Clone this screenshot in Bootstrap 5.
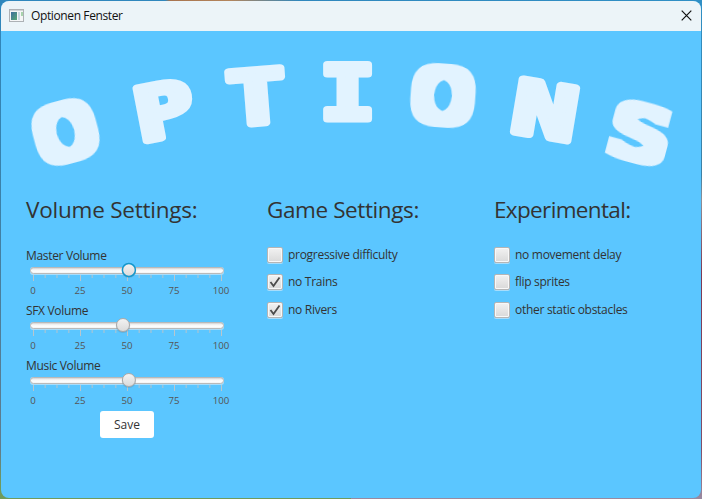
<!DOCTYPE html>
<html lang="de">
<head>
<meta charset="utf-8">
<meta name="viewport" content="width=device-width, initial-scale=1">
<title>Optionen Fenster</title>
<link href="https://cdn.jsdelivr.net/npm/bootstrap@5.3.0/dist/css/bootstrap.min.css" rel="stylesheet">
<style>
html,body{height:100%;overflow:hidden}
body{padding:1px 1px 1px 1px;background:linear-gradient(90deg,#2f87bd 0,#2f87bd 165px,#a8744f 170px,#b3855c 230px,#2f87bd 300px,#2f8fc5 100%) top/100% 12px no-repeat,linear-gradient(#2f87bd,#3c81a8 40%,#607c8c 90%,#6f9a5c 97%) left/50% 100% no-repeat,linear-gradient(#2f8fc5,#3d81a5 35%,#8d8f98 40%,#7d3a55 55%,#80506a 90%,#9a8aa0) right/50% 100% no-repeat;font-family:"Open Sans","Noto Sans",sans-serif;font-size:12px;line-height:16px;color:#333}
.window{height:497px;width:700px;border-radius:8px;background:#5bc6ff}
.titlebar{height:30px;background:#ecf4f8;color:#111;padding:0 9px 0 8px}
.titlebar span{letter-spacing:-.38px}
.banner{height:165px}
.banner text{font:bold 74px "DejaVu Sans Mono",monospace;text-anchor:middle;fill:#e2f3ff;stroke:#e2f3ff;stroke-width:7px;stroke-linejoin:round}
.banner .squared text{font-weight:400;font-size:72px;stroke:none}
.settings{padding-left:25px}
.col-volume{width:241px}
.col-game{width:227px}
h2{font-size:22.5px;line-height:30px;font-weight:400;margin:-1px 0 22px;letter-spacing:-.22px;white-space:nowrap}
.col-game h2{letter-spacing:-.4px}
.col-extra h2{letter-spacing:-.65px}
.field{height:55px;width:204px}
.field label{display:block;height:16px;letter-spacing:-.33px}
#sliders{padding-top:1px}
.slider{display:block;margin-top:-2px}
.slider text{font-size:9.7px;fill:#555;text-anchor:middle}
.btn-save{width:54px;height:27px;padding:0;margin-left:74px;margin-top:-2px;font-size:12px;background:#fff;border:0;border-radius:3px;color:#333}
.option{height:27.5px;letter-spacing:-.29px}
.option:first-child{height:27px}
.box{width:16px;height:16px;margin-right:3px;border:1px solid #b5b5b5;border-radius:2px;background:linear-gradient(#f2f2f2,#d9d9d9);box-shadow:inset 0 0 0 1px #f8f8f8,0 1px 0 #a8ddfb;flex:none}
.box svg{display:block}
.caption{padding-left:2px}
</style>
</head>
<body>
<main class="window overflow-hidden d-flex flex-column">
<header class="titlebar d-flex align-items-center justify-content-between">
<div class="d-flex align-items-center">
<svg width="15" height="13" viewBox="0 0 15 13" style="margin:-2px 7px 0 0"><defs><linearGradient id="pane" x2="1" y2="1"><stop stop-color="#3d6e9e"/><stop offset="1" stop-color="#58a874"/></linearGradient></defs><rect x=".5" y=".5" width="14" height="12" fill="#f5f6f7" stroke="#adb1b5"/><path d="M1 1.5h13" stroke="#d1d5d8"/><path fill="url(#pane)" d="M2 3h6v8H2z"/><path fill="#c9d9e2" d="M9 3h2v8H9z"/><path fill="#a8d3ad" d="M12 3h2v4h-2z"/></svg>
<span>Optionen Fenster</span></div>
<svg width="11" height="11" viewBox="0 0 11 11" style="margin-top:-2px"><path d="M.7.7l9.6 9.6M10.3.7L.7 10.3" stroke="#111" stroke-width="1.2"/></svg>
</header>
<svg class="banner" width="700" height="165" viewBox="1 31 700 165" role="img" aria-label="Options">
<defs><filter id="fat" x="-50%" y="-50%" width="200%" height="200%"><feMorphology operator="dilate" radius="6 5"/></filter></defs>
<g class="squared" transform="translate(65.5 132) rotate(-15)"><g filter="url(#fat)"><text transform="scale(1.5 1)" y="26.3">O</text></g></g>
<g transform="translate(164 110) rotate(-11) scale(1.34 1)"><text y="27">P</text></g>
<g transform="translate(256.5 96.5) rotate(-4.5) scale(1.34 1)"><text y="27">T</text></g>
<g transform="translate(347.5 92) scale(1.25 1)"><text y="27">I</text></g>
<g class="squared" transform="translate(443 95.5) rotate(4)"><g filter="url(#fat)"><text transform="scale(1.5 1)" y="26.3">O</text></g></g>
<g transform="translate(545 110) rotate(9.5) scale(1.45 1)"><text y="27">N</text></g>
<g class="squared" transform="translate(640 133) rotate(15)"><g filter="url(#fat)"><text transform="scale(1.42 .96)" y="26.3">S</text></g></g>
</svg>
<div class="settings d-flex">
<section class="col-volume"><h2>Volume Settings:</h2>
<div id="sliders"></div>
<button class="btn btn-save" type="button">Save</button>
</section>
<section class="col-game"><h2>Game Settings:</h2>
<div class="options" data-items="progressive difficulty,0|no Trains,1|no Rivers,1"></div></section>
<section class="col-extra"><h2>Experimental:</h2>
<div class="options" data-items="no movement delay,0|flip sprites,0|other static obstacles,0"></div></section>
</div>
</main>
<svg width="0" height="0" class="position-absolute"><defs>
<linearGradient id="track" x2="0" y2="1"><stop stop-color="#c4c4c4"/><stop offset=".3" stop-color="#eee"/><stop offset=".6" stop-color="#fff"/><stop offset="1" stop-color="#eee"/></linearGradient>
<linearGradient id="knob" x2="0" y2="1"><stop stop-color="#f3f3f3"/><stop offset="1" stop-color="#dadada"/></linearGradient></defs></svg>
<script>
const levels=[["Master Volume",128.9,true],["SFX Volume",123,false],["Music Volume",128.9,false]];
document.getElementById("sliders").innerHTML=levels.map(([name,x,focus])=>{
 let ticks="",labels="";
 for(let i=0;i<=16;i++){const p=33.5+i*11.75,major=i%4===0;
  ticks+=`<path d="M${p} 13v${major?6:3}" stroke="${major?'#b9c6cd':'#95c5df'}" stroke-width="${major?1:1.6}"/>`;
  if(major)labels+=`<text x="${p-.4}" y="32">${i/4*25}</text>`}
 return `<div class="field"><label>${name}</label><svg class="slider" width="204" height="39" viewBox="26 0 204 39"><rect x="30" y="5" width="194" height="8" rx="3" fill="#a8ddfb"/><rect x="30.5" y="5.5" width="193" height="6" rx="3" fill="url(#track)" stroke="#b9b9b9"/>${ticks}${labels}<circle cx="${x}" cy="8.8" r="7.2" fill="#6b8da0" opacity=".35"/><circle cx="${x}" cy="8" r="6.5" fill="url(#knob)" stroke="${focus?'#1597cb':'#a9a9a9'}" stroke-width="${focus?1.5:1}"/></svg></div>`}).join("");
document.querySelectorAll(".options").forEach(el=>{
 el.innerHTML=el.dataset.items.split("|").map(s=>{const [t,on]=s.split(",");
 return `<div class="option d-flex align-items-start"><span class="box">${on==="1"?'<svg width="14" height="14" viewBox="0 0 14 14"><path d="M2.5 7L5.5 11L11.5 2.5" fill="none" stroke="#4c4c4c" stroke-width="1.8"/></svg>':''}</span><span class="caption">${t}</span></div>`}).join("")});
</script>
<script src="https://cdn.jsdelivr.net/npm/bootstrap@5.3.0/dist/js/bootstrap.bundle.min.js"></script>
</body>
</html>
